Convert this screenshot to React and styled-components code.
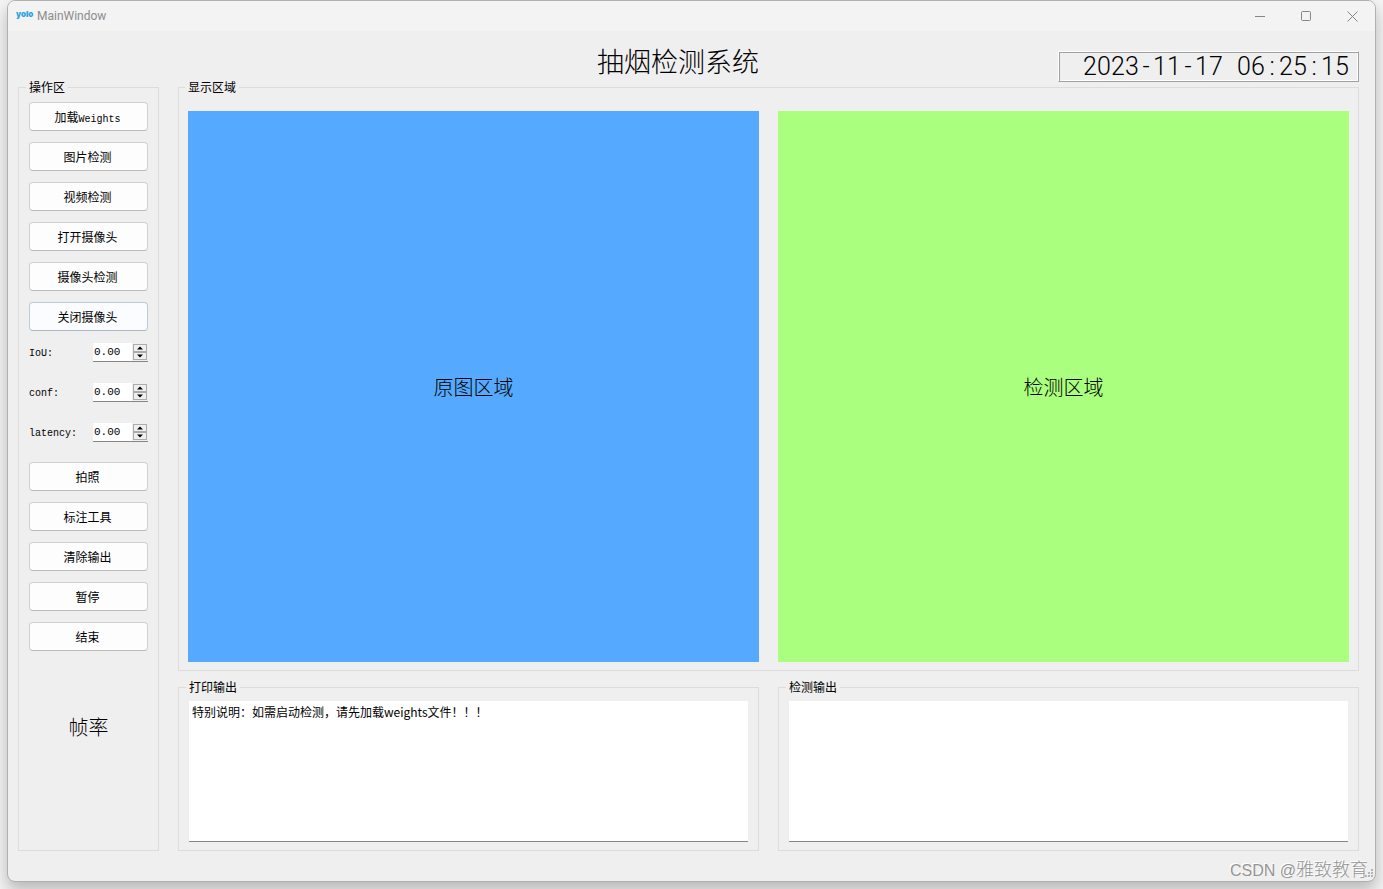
import React from 'react';
import styled, {createGlobalStyle} from 'styled-components';

const GlobalStyle = createGlobalStyle`
  * {
    box-sizing: border-box;
  }
  body {
    background: #f4f4f4;
    color: #000;
    font-family: 'Noto Sans CJK SC', sans-serif;
    font-size: 12px;
    font-weight: 300;
    margin: 0;
  }
  button, input, textarea {
    color: inherit;
    font: inherit;
  }
`;

const Desktop = styled.div`
  display: flex;
  min-height: 100vh;
  overflow: hidden;
  padding: 0 7px 7px;
`;
const Window = styled.div`
  background: #efefef;
  border: 1px solid #b0b0b0;
  border-radius: 8px;
  box-shadow: 0 8px 16px rgba(0, 0, 0, .25);
  display: flex;
  flex: 1;
  flex-direction: column;
  overflow: hidden;
  position: relative;
`;

const TitleBar = styled.header`
  align-items: center;
  background: #f3f3f3;
  display: flex;
  height: 30px;
  padding-left: 8px;
`;
const Logo = styled.span`
  color: #2ba3dc;
  font-family: Inter, sans-serif;
  font-size: 8px;
  font-weight: 900;
  line-height: 12px;
  padding-bottom: 4px;
  width: 21px;
`;
const WindowName = styled.span`
  color: #8c8c8c;
  flex: 1;
  font-family: Roboto, sans-serif;
  font-size: 12px;
  font-weight: 400;
`;
const WindowButton = styled.button`
  align-items: center;
  background: none;
  border: 0;
  display: flex;
  height: 28px;
  justify-content: center;
  padding: 0;
  width: 46px;

  svg {
    fill: none;
    stroke: #868686;
  }
`;

const Content = styled.main`
  display: flex;
  flex: 1;
  flex-direction: column;
  padding: 0 16px 30px 10px;
`;
const Heading = styled.div`
  align-items: end;
  display: grid;
  grid-template-columns: 280px 1fr 301px;
  height: 51px;
`;
const Title = styled.h1`
  font-size: 27px;
  font-weight: 300;
  grid-column: 2;
  line-height: 42px;
  margin: 0;
  text-align: center;
`;
const Clock = styled.time`
  border: 1px solid;
  border-color: #fff #a0a0a0 #a0a0a0 #fff;
  box-shadow: inset 1px 1px #a0a0a0, inset -1px -1px #fff;
  display: flex;
  font-family: Roboto, sans-serif;
  font-size: 25px;
  font-weight: 300;
  height: 31px;
  justify-content: flex-end;
  line-height: 30px;
  padding-right: 9px;
`;
const ClockCell = styled.span`
  text-align: center;
  white-space: pre;
  width: 14px;
`;

const Columns = styled.div`
  display: grid;
  flex: 1;
  gap: 19px;
  grid-template-columns: 141px 1fr;
`;
const Group = styled.fieldset`
  border: 1px solid #dcdcdc;
  display: flex;
  flex-direction: ${props => props.$row ? 'row' : 'column'};
  gap: ${props => props.$row ? '19px' : '11px'};
  margin: 0;
  min-width: 0;
  padding: ${props => props.$padding};
`;
const Legend = styled.legend`
  font-weight: 400;
  line-height: 10px;
  margin-left: -3px;
  padding: 0 3px;
`;
const Main = styled.div`
  display: flex;
  flex-direction: column;
  gap: 11px;
`;
const DisplayGroup = styled(Group)`
  flex: 1;
`;
const Screen = styled.div`
  align-items: center;
  background: ${props => props.$color};
  display: flex;
  flex: 1;
  font-size: 20px;
  justify-content: center;
`;
const Outputs = styled.div`
  display: grid;
  gap: 19px;
  grid-template-columns: 1fr 1fr;
`;
const Output = styled.textarea`
  background: #fff;
  border: 0;
  border-bottom: 1px solid #868686;
  display: block;
  font-weight: 400;
  height: 141px;
  line-height: 16px;
  outline: 0;
  padding: 3px;
  resize: none;
  width: 100%;
`;

const PushButton = styled.button`
  background: ${props => props.$hover ? '#fafcff' : '#fdfdfd'};
  border: 1px solid ${props => props.$hover ? '#bccbd8' : '#d0d0d0'};
  border-bottom-color: ${props => props.$hover ? '#a9b8c4' : '#bababa'};
  border-radius: 4px;
  font-weight: 400;
  height: 29px;
  line-height: 18px;
  padding: 0 2px 0 0;
`;
const Latin = styled.span`
  font-family: 'Liberation Mono', monospace;
  font-size: 10px;
  line-height: 10px;
`;
const SpinRow = styled.div`
  align-items: flex-start;
  display: flex;
  height: 29px;
  justify-content: space-between;
`;
const SpinLabel = styled.label`
  font-family: 'Liberation Mono', monospace;
  font-size: 10px;
  font-weight: 400;
  line-height: 24px;
`;
const SpinBox = styled.div`
  border-bottom: 1px solid #868686;
  display: flex;
  height: 20px;
  padding-top: 1px;
  width: 55px;
`;
const SpinInput = styled.input`
  background: #fff;
  border: 0;
  flex: 1;
  font-family: 'Liberation Mono', monospace;
  font-size: 11px;
  font-weight: 400;
  min-width: 0;
  outline: 0;
  padding: 0 1px;
`;
const Stepper = styled.div`
  display: flex;
  flex-direction: column;
  padding: 1px;
`;
const Step = styled.button`
  align-items: center;
  background: #efefef;
  border: 1px solid #ababab;
  display: flex;
  height: 8px;
  justify-content: center;
  padding: 0;
  width: 14px;
`;
const FrameRate = styled.div`
  font-size: 20px;
  line-height: 130px;
  text-align: center;
`;

const Watermark = styled.div`
  bottom: 0;
  color: #959595;
  font-size: 18px;
  line-height: 20px;
  position: absolute;
  right: 7px;
  text-shadow: -1px -1px #fff;
`;
const WatermarkSite = styled.span`
  font-family: 'Liberation Sans', sans-serif;
  font-size: 16px;
  font-weight: 400;
`;
const Grip = styled.svg`
  bottom: 4px;
  fill: #b4b4b4;
  position: absolute;
  right: 2px;
`;

const Spin = ({name}) => {
  const [value, setValue] = React.useState('0.00');
  const step = by => setValue(Math.max(0, Number(value) + by).toFixed(2));

  return (
    <SpinRow>
      <SpinLabel htmlFor={name}>{name}:</SpinLabel>
      <SpinBox>
        <SpinInput id={name} inputMode='decimal' value={value} onChange={e => setValue(e.target.value)} />
        <Stepper>
          <Step aria-label={name + ' +'} onClick={() => step(0.01)}>
            <svg width='6' height='4'><path d='M0 3.5L3 .5L6 3.5Z' /></svg>
          </Step>
          <Step aria-label={name + ' -'} onClick={() => step(-0.01)}>
            <svg width='6' height='4'><path d='M0 .5L3 3.5L6 .5Z' /></svg>
          </Step>
        </Stepper>
      </SpinBox>
    </SpinRow>
  );
};

const App = () => (
  <Desktop>
    <GlobalStyle />
    <Window>
      <TitleBar>
        <Logo>yolo</Logo>
        <WindowName>MainWindow</WindowName>
        <WindowButton aria-label='Minimize'>
          <svg width='11' height='11'><path d='M0 5.5H10' /></svg>
        </WindowButton>
        <WindowButton aria-label='Maximize'>
          <svg width='11' height='11'><rect x='.5' y='.5' width='9' height='9' rx='1' /></svg>
        </WindowButton>
        <WindowButton aria-label='Close'>
          <svg width='11' height='11'><path d='M.5 .5L10.5 10.5M10.5 .5L.5 10.5' /></svg>
        </WindowButton>
      </TitleBar>

      <Content>
        <Heading>
          <Title>抽烟检测系统</Title>
          <Clock dateTime='2023-11-17T06:25:15'>
            {'2023-11-17 06:25:15'.split('').map((char, i) => (
              <ClockCell key={i}>{char}</ClockCell>
            ))}
          </Clock>
        </Heading>

        <Columns>
          <Group $padding='10px'>
            <Legend>操作区</Legend>
            <PushButton>加载<Latin>Weights</Latin></PushButton>
            <PushButton>图片检测</PushButton>
            <PushButton>视频检测</PushButton>
            <PushButton>打开摄像头</PushButton>
            <PushButton>摄像头检测</PushButton>
            <PushButton $hover>关闭摄像头</PushButton>
            <Spin name='IoU' />
            <Spin name='conf' />
            <Spin name='latency' />
            <PushButton>拍照</PushButton>
            <PushButton>标注工具</PushButton>
            <PushButton>清除输出</PushButton>
            <PushButton>暂停</PushButton>
            <PushButton>结束</PushButton>
            <FrameRate>帧率</FrameRate>
          </Group>

          <Main>
            <DisplayGroup $row $padding='19px 9px 8px'>
              <Legend>显示区域</Legend>
              <Screen $color='#55aaff'>原图区域</Screen>
              <Screen $color='#aaff7f'>检测区域</Screen>
            </DisplayGroup>
            <Outputs>
              <Group $padding='9px 10px 8px'>
                <Legend>打印输出</Legend>
                <Output aria-label='打印输出' spellCheck={false} defaultValue='特别说明：如需启动检测，请先加载weights文件！！！' />
              </Group>
              <Group $padding='9px 10px 8px'>
                <Legend>检测输出</Legend>
                <Output aria-label='检测输出' />
              </Group>
            </Outputs>
          </Main>
        </Columns>
      </Content>

      <Watermark><WatermarkSite>CSDN @</WatermarkSite>雅致教育</Watermark>
      <Grip width='8' height='8'>
        <path d='M6 0h2v2h-2zM3 3h2v2h-2zM6 3h2v2h-2zM0 6h2v2h-2zM3 6h2v2h-2zM6 6h2v2h-2z' />
      </Grip>
    </Window>
  </Desktop>
);

export default App;
